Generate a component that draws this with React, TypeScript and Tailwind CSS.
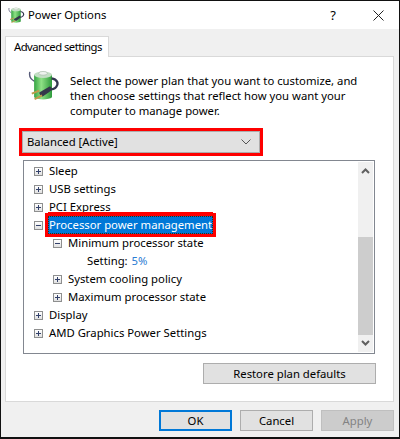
const FONT = "font-['Noto_Sans','Open_Sans',sans-serif]";

function PowerIcon({ size }: { size: number }) {
  return (
    <svg width={size} height={size} viewBox="0 0 32 34" className="shrink-0">
      <defs>
        <linearGradient id="batt" x1="0" x2="1" y1="0" y2="0">
          <stop offset="0" stopColor="#35a443" />
          <stop offset="0.4" stopColor="#8fe186" />
          <stop offset="1" stopColor="#2e9a3b" />
        </linearGradient>
      </defs>
      <path d="M1 2c-1 4 1 8 5 10" fill="none" stroke="#565a78" strokeWidth="1.500" />
      <path d="M5.500 5v24c3 3 16 3 19 0V5z" fill="url(#batt)" />
      <ellipse cx="15" cy="5" rx="9.500" ry="3.500" fill="#c3dec4" />
      <ellipse cx="15" cy="3.500" rx="4.500" ry="2" fill="#eef2ee" stroke="#94a896" strokeWidth="0.500" />
      <path d="M24 9c6 1 8 5 5 9-2 3-6 3-9 3" fill="none" stroke="#33364f" strokeWidth="2.400" />
      <path d="M11 24l10-6c2-1 3 0 3 2 0 1-1 2-2 3l-7 5c-2 1-4-2-4-4z" fill="#34374a" />
      <path d="M3 25l8-3M6 31l8-4" stroke="#c09a4a" strokeWidth="2" />
    </svg>
  );
}

function Expander({ open = false }: { open?: boolean }) {
  return (
    <span className="relative w-[9px] h-[9px] border border-[#8e8f8f] bg-[linear-gradient(#ffffff,#e0e0e0)] shrink-0">
      <span className="absolute left-[1px] top-[3px] w-[5px] h-px bg-[#33416b]" />
      {!open && <span className="absolute left-[3px] top-[1px] w-px h-[5px] bg-[#33416b]" />}
    </span>
  );
}

function Row({ label, level = 0, open, selected }: { label: string; level?: number; open?: boolean; selected?: boolean }) {
  return (
    <div className={level ? "h-[18px] flex items-center pl-[28px]" : "h-[18px] flex items-center pl-[9px]"}>
      <Expander open={open} />
      <span
        className={
          selected
            ? "ml-[5px] h-[18px] leading-[16px] bg-[#0078d7] text-white border border-dotted border-[#3a2a10] outline-3 outline-[#fe0000] shadow-[0_-4px_0_0_#fe0000] whitespace-nowrap"
            : "ml-[6px] leading-[18px] whitespace-nowrap"
        }
      >
        {label}
      </span>
    </div>
  );
}

function Button({ label, className }: { label: string; className: string }) {
  return (
    <button className={"h-[21px] border bg-[#e1e1e1] text-[11.3px] leading-[17px] " + className}>{label}</button>
  );
}

export default function App() {
  return (
    <div className={FONT + " w-[400px] h-[439px] flex flex-col border border-b-2 border-[#111] bg-[#f0f0f0] text-[11.3px] text-black overflow-hidden"}>
      {/* Title bar */}
      <div className="h-[28px] bg-white flex items-center pl-[7px] shrink-0">
        <PowerIcon size={17} />
        <span className="ml-[3px] text-[11.3px]">Power Options</span>
        <span className="ml-auto w-[20px] text-center text-[13px] leading-none">?</span>
        <svg width="11" height="11" viewBox="0 0 11 11" className="mr-[15px] ml-[30px]">
          <path d="M.5.5l10 10M10.500.5l-10 10" stroke="#222" fill="none" />
        </svg>
      </div>

      {/* Tab */}
      <div className="pl-[4px] pt-[7px] shrink-0">
        <div className="w-[104px] h-[21px] -mb-px relative z-10 bg-white border border-b-0 border-[#d9d9d9] pl-[8px] leading-[19px] tracking-[-0.55px] whitespace-nowrap">
          Advanced settings
        </div>
      </div>

      {/* Panel */}
      <div className="ml-[4px] w-[389px] h-[346px] bg-white border border-[#d9d9d9] flex flex-col shrink-0">
        <div className="flex h-[71px] pl-[22px] pt-[13px]">
          <PowerIcon size={32} />
          <p className="ml-[10px] mt-[3px] leading-[15px] whitespace-nowrap">
            Select the power plan that you want to customize, and
            <br />
            then choose settings that reflect how you want your
            <br />
            computer to manage power.
          </p>
        </div>

        <div className="ml-[13px] w-[244px] h-[28px] border-[3px] border-[#fe0000]">
          <div className="h-full border border-[#adadad] bg-[#e1e1e1] flex items-center pl-[4px] pr-[8px] justify-between">
            <span>Balanced [Active]</span>
            <svg width="10" height="6" viewBox="0 0 10 6">
              <path d="M.5.500l4.500 4.500 4.500-4.500" fill="none" stroke="#555" />
            </svg>
          </div>
        </div>

        <div className="ml-[17px] mt-[4px] w-[352px] h-[194px] border border-[#828790] flex p-px">
          <div className="flex-1">
            <Row label="Sleep" />
            <Row label="USB settings" />
            <Row label="PCI Express" />
            <Row label="Processor power management" open selected />
            <Row label="Minimum processor state" level={1} open />
            <div className="h-[18px] leading-[18px] pl-[62px]">
              Setting: <span className="ml-px text-[#2b7cd3]">5%</span>
            </div>
            <Row label="System cooling policy" level={1} />
            <Row label="Maximum processor state" level={1} />
            <Row label="Display" />
            <Row label="AMD Graphics Power Settings" />
          </div>
          <div className="w-[15px] bg-[#f0f0f0] flex flex-col items-center shrink-0">
            <div className="h-[75px] w-full flex justify-center pt-[6px]">
              <svg width="9" height="6" viewBox="0 0 9 6">
                <path d="M1 5l3.500-3.500L8 5" fill="none" stroke="#606060" strokeWidth="2" />
              </svg>
            </div>
            <div className="h-[98px] w-full bg-[#cdcdcd]" />
            <div className="flex-1 w-full flex justify-center pt-[5px]">
              <svg width="9" height="6" viewBox="0 0 9 6">
                <path d="M1 1l3.500 3.500L8 1" fill="none" stroke="#606060" strokeWidth="2" />
              </svg>
            </div>
          </div>
        </div>

        <div className="flex justify-end pr-[17px] mt-[9px]">
          <Button label="Restore plan defaults" className="w-[173px] border-[#adadad] text-black" />
        </div>
      </div>

      {/* Dialog buttons */}
      <div className="flex justify-end gap-[8px] pr-[5px] mt-[8px]">
        <Button label="OK" className="w-[73px] border-2 border-[#0078d7]" />
        <Button label="Cancel" className="w-[73px] border-[#adadad]" />
        <button className="w-[73px] h-[21px] border border-[#bfbfbf] bg-[#cccccc] text-[#838383] text-[11.3px] leading-[17px]">Apply</button>
      </div>
    </div>
  );
}
